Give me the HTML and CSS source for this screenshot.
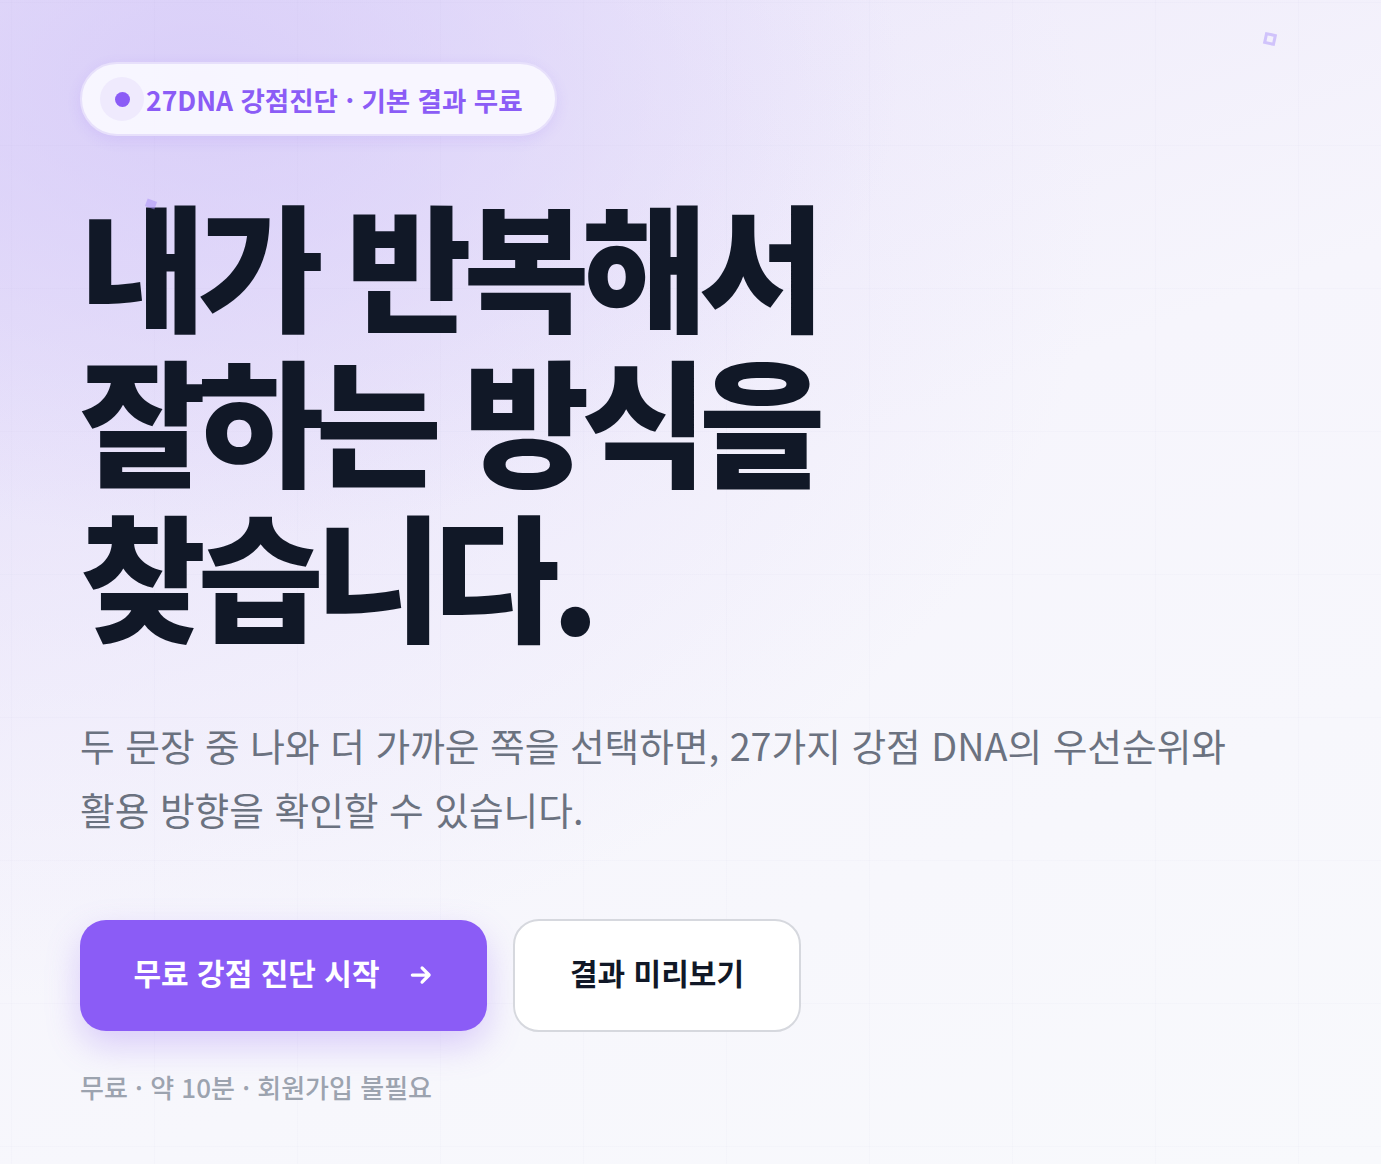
FILE: index.html
```html
<!DOCTYPE html>
<html lang="ko">
<head>
<meta charset="utf-8">
<link rel="stylesheet" href="styles.css">
</head>
<body>
<main class="hero">
  <span class="spark spark-a"></span>
  <span class="spark spark-b"></span>
  <div class="hero-inner">
    <div class="badge">
      <span class="badge-dot"><span></span></span>
      <span class="badge-text">27DNA 강점진단 · 기본 결과 무료</span>
    </div>
    <h1 class="title"><span class="title-line">내가 반복해서</span><span class="title-line">잘하는 방식을</span><span class="title-line">찾습니다.</span></h1>
    <p class="lead">두 문장 중 나와 더 가까운 쪽을 선택하면, 27가지 강점 DNA의 우선순위와 활용 방향을 확인할 수 있습니다.</p>
    <div class="actions">
      <a class="btn btn-primary" href="#">무료 강점 진단 시작
        <svg class="arrow" viewBox="0 0 24 24" width="26" height="26"><path d="M4 12h15M13 5.5l6.5 6.5-6.5 6.5" fill="none" stroke="#fff" stroke-width="3" stroke-linecap="round" stroke-linejoin="round"/></svg>
      </a>
      <a class="btn btn-secondary" href="#">결과 미리보기</a>
    </div>
    <p class="note">무료 · 약 10분 · 회원가입 불필요</p>
  </div>
</main>
</body>
</html>
```
FILE: styles.css
```css
* { box-sizing: border-box; }
html, body { margin: 0; padding: 0; }
body {
  font-family: "Noto Sans CJK KR", "Noto Sans", sans-serif;
  background: #f8f9fc;
  color: #111827;
}
.hero {
  position: relative;
  min-height: 1164px;
  overflow: hidden;
  background:
    linear-gradient(90deg, rgba(120, 120, 170, 0.025) 1px, transparent 1px) 11px 0 / 143px 143px,
    linear-gradient(0deg, rgba(120, 120, 170, 0.025) 1px, transparent 1px) 0 3px / 143px 143px,
    radial-gradient(ellipse 700px 460px at 200px 80px, rgba(214, 202, 248, 0.8), rgba(214, 202, 248, 0) 100%),
    radial-gradient(ellipse 1100px 800px at 0px 200px, rgba(228, 221, 250, 0.85), rgba(228, 221, 250, 0) 100%),
    linear-gradient(160deg, #ece7fa 0%, #f6f5fc 45%, #f8f9fc 100%);
}
.hero-inner {
  padding: 62px 80px 0 80px;
  display: flex;
  flex-direction: column;
  align-items: flex-start;
}
.spark {
  position: absolute;
  width: 12px;
  height: 12px;
  border: 3px solid rgba(167, 139, 250, 0.45);
  transform: rotate(12deg);
}
.spark-a { left: 1264px; top: 33px; }
.spark-b { left: 146px; top: 200px; width: 10px; height: 8px; border: none; background: rgba(167, 139, 250, 0.5); transform: rotate(20deg); }
.badge {
  display: flex;
  align-items: center;
  gap: 2px;
  height: 74px;
  padding: 0 32px 0 18px;
  border-radius: 999px;
  background: rgba(250, 248, 255, 0.92);
  border: 2px solid #e7e0fb;
  box-shadow: 0 4px 14px rgba(139, 92, 246, 0.12);
}
.badge-dot {
  width: 44px;
  height: 44px;
  border-radius: 50%;
  background: #efeafd;
  display: flex;
  align-items: center;
  justify-content: center;
}
.badge-dot span {
  width: 15px;
  height: 15px;
  border-radius: 50%;
  background: #8b5cf6;
}
.badge-text {
  font-size: 26.5px;
  font-weight: 700;
  color: #8b5cf6;
}
.title {
  margin: 49px 0 0 0;
  display: flex;
  flex-direction: column;
  font-size: 137px;
  line-height: 155px;
  font-weight: 900;
  letter-spacing: -0.06em;
  color: #111827;
}
.title-line {
  display: block;
  height: 155px;
  white-space: nowrap;
}
.lead {
  margin: 63px 0 0 0;
  max-width: 1170px;
  font-size: 37.7px;
  line-height: 64px;
  color: #6b7280;
  font-weight: 400;
  word-break: keep-all;
}
.actions {
  margin-top: 78px;
  display: flex;
  gap: 26px;
  align-items: center;
}
.btn {
  display: flex;
  align-items: center;
  justify-content: center;
  text-decoration: none;
  font-size: 30px;
  font-weight: 700;
  border-radius: 26px;
  padding-bottom: 8px;
}
.btn-primary {
  width: 407px;
  height: 111px;
  background: #8b5cf6;
  color: #fff;
  gap: 28px;
  box-shadow: 0 14px 34px rgba(139, 92, 246, 0.28);
}
.btn-primary .arrow { margin-top: 6px; }
.btn-secondary {
  width: 288px;
  height: 113px;
  background: #fff;
  color: #111827;
  border: 2px solid #d6d8de;
}
.note {
  margin: 36px 0 0 0;
  font-size: 26px;
  color: #9ca3af;
  font-weight: 500;
}
```
